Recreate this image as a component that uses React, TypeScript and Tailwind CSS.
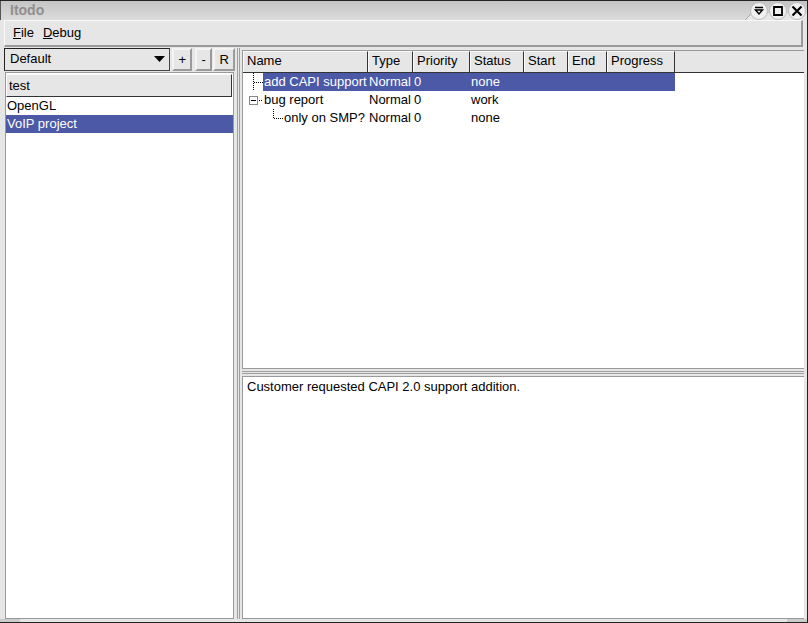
const columns = [
  { label: "Name", width: "w-[125px]" },
  { label: "Type", width: "w-[45px]" },
  { label: "Priority", width: "w-[57px]" },
  { label: "Status", width: "w-[54px]" },
  { label: "Start", width: "w-[44px]" },
  { label: "End", width: "w-[39px]" },
  { label: "Progress", width: "w-[68px]" },
];

function WinButton({ children }: { children: React.ReactNode }) {
  return (
    <div className="w-[18px] h-[18px] rounded-full bg-[#f0f0f0] border border-[#bdbdbd] flex items-center justify-center">
      <svg width="14" height="14" viewBox="0 0 14 14" fill="none" stroke="#000">
        {children}
      </svg>
    </div>
  );
}

function SmallButton({ label, width }: { label: string; width: string }) {
  return (
    <div
      className={`${width} h-[23px] flex items-center justify-center bg-[#e6e6e6] border-2 border-t-[#f4f4f4] border-l-[#f4f4f4] border-r-[#9a9a9a] border-b-[#9a9a9a]`}
    >
      {label}
    </div>
  );
}

function Row({
  name,
  status,
  indent,
  nameWidth,
  selected,
  tree,
}: {
  name: string;
  status: string;
  indent: string;
  nameWidth: string;
  selected?: boolean;
  tree: React.ReactNode;
}) {
  return (
    <div className="flex h-[18px] w-[432px] leading-[18px] relative">
      <div className="absolute left-0 top-0">{tree}</div>
      <div className={`flex ${indent} ${selected ? "bg-[#4c59a6] text-white" : ""}`}>
        <div className={`${nameWidth} pl-[1px] whitespace-nowrap`}>{name}</div>
        <div className="w-[45px] pl-[1px]">Normal</div>
        <div className="w-[57px] pl-[1px]">0</div>
        <div className={selected ? "w-[205px] pl-[1px]" : "w-[54px] pl-[1px]"}>{status}</div>
      </div>
    </div>
  );
}

export default function App() {
  return (
    <div className="w-[808px] h-[623px] overflow-hidden bg-[#e6e6e6] flex flex-col text-[13px] text-black font-['Liberation_Sans',sans-serif] border-t border-r border-[#222]">
      {/* Title bar */}
      <div className="relative h-[19px] shrink-0 flex items-center justify-between pl-[9px] pr-[1px] bg-gradient-to-b from-[#c4c4c4] to-[#dcdcdc] border-l border-l-[#555]">
        <span className="font-bold text-[#8f8f8f] text-[14px]">Itodo</span>
        <svg width="62" height="7" className="absolute right-0 bottom-0" fill="#e6e6e6">
          <path d="M0 7 L7 0 H62 V7 Z" stroke="none" />
          <path d="M0 7 L7 0" stroke="#a8a8a8" fill="none" />
        </svg>
        <div className="relative flex gap-[1px]">
          <WinButton>
            <path d="M3 3.5h8M3.5 6l3.5 4L10.500 6z" strokeWidth="1.4" />
          </WinButton>
          <WinButton>
            <path d="M3 3h8v8H3z" strokeWidth="1.8" />
          </WinButton>
          <WinButton>
            <path d="M2.500 2.500l9 9M11.500 2.500l-9 9" strokeWidth="2.200" />
          </WinButton>
        </div>
      </div>

      {/* Menu bar */}
      <div className="h-[27px] shrink-0 mx-[4px] pl-[8px] flex items-center gap-[9px] border-t border-l border-[#fafafa] border-b-2 border-b-[#9a9a9a] border-r-2 border-r-[#9a9a9a]">
        <span>
          <span className="underline">F</span>ile
        </span>
        <span>
          <span className="underline">D</span>ebug
        </span>
      </div>

      {/* Main */}
      <div className="flex-1 min-h-0 flex pl-[4px] pr-[3px] pt-[1px]">
        {/* Left panel */}
        <div className="w-[231px] shrink-0 flex flex-col">
          <div className="flex gap-[1px] h-[23px] shrink-0">
            <div className="w-[168px] mr-[1px] h-[23px] flex items-center justify-between pl-[5px] pr-[3px] pb-[1px] bg-[#e6e6e6] border border-[#222] border-r-[#444] border-b-[#444]">
              <span>Default</span>
              <svg width="11" height="6" viewBox="0 0 11 6" className="mr-[1px]">
                <path d="M0 0h11L5.500 6z" fill="#000" />
              </svg>
            </div>
            <SmallButton label="+" width="w-[20px]" />
            <div className="w-[1px]" />
            <SmallButton label="-" width="w-[17px]" />
            <SmallButton label="R" width="w-[22px]" />
          </div>
          <div className="flex-1 min-h-0 ml-[1px] mr-[1px] mt-[1px] bg-white border border-[#9a9a9a] pt-[1px]">
            <div className="h-[23px] mr-[1px] flex items-center pl-[2px] bg-[#e6e6e6] border border-t-[#fafafa] border-l-[#fafafa] border-r-[#333] border-b-[#333]">
              test
            </div>
            <div className="h-[18px] leading-[18px] pl-[1px]">OpenGL</div>
            <div className="h-[18px] leading-[18px] pl-[1px] bg-[#4c59a6] text-white">VoIP project</div>
          </div>
        </div>

        {/* Vertical splitter */}
        <div className="w-[7px] shrink-0 flex justify-center">
          <div className="w-[3px] bg-[#e6e6e6] border-x border-[#a0a0a0]" />
        </div>

        {/* Right panel */}
        <div className="flex-1 min-w-0 flex flex-col">
          <div className="h-[319px] shrink-0 mt-[2px] bg-white border border-[#9a9a9a] border-r-0 flex flex-col">
            <div className="h-[22px] shrink-0 flex bg-[#e6e6e6] border-b border-[#333]">
              {columns.map((c) => (
                <div
                  key={c.label}
                  className={`${c.width} shrink-0 pl-[3px] leading-[18px] whitespace-nowrap border-t border-l border-t-[#fafafa] border-l-[#fafafa] border-r border-r-[#333]`}
                >
                  {c.label}
                </div>
              ))}
            </div>
            <Row
              name="add CAPI support"
              status="none"
              indent="ml-[20px]"
              nameWidth="w-[105px]"
              selected
              tree={
                <svg width="21" height="18" fill="none" stroke="#000" strokeDasharray="1 1">
                  <path d="M10.500 0v18M11 9.500h10" />
                </svg>
              }
            />
            <Row
              name="bug report"
              status="work"
              indent="ml-[20px]"
              nameWidth="w-[105px]"
              tree={
                <svg width="21" height="18" fill="none">
                  <rect x="6.500" y="5.500" width="8" height="8" fill="#fff" stroke="#888" />
                  <path d="M8 9.500h5" stroke="#000" />
                  <path d="M16 9.500h4" stroke="#000" strokeDasharray="1 1" />
                </svg>
              }
            />
            <Row
              name="only on SMP?"
              status="none"
              indent="ml-[40px]"
              nameWidth="w-[85px]"
              tree={
                <svg width="41" height="18" fill="none" stroke="#000" strokeDasharray="1 1">
                  <path d="M30.500 0v9.500H40" />
                </svg>
              }
            />
          </div>

          {/* Horizontal splitter */}
          <div className="h-[7px] shrink-0 flex flex-col justify-center">
            <div className="h-[3px] bg-[#e6e6e6] border-y border-[#a0a0a0]" />
          </div>

          <div className="flex-1 min-h-0 bg-white border border-[#9a9a9a] border-r-0 pl-[4px] pt-[1px] leading-[18px]">
            Customer requested CAPI 2.0 support addition.
          </div>
        </div>
      </div>

      {/* Bottom resize handles */}
      <div className="h-[4px] shrink-0 flex justify-between border-b border-[#222]">
        <div className="w-[20px] bg-[#cccccc]" />
        <div className="w-[20px] bg-[#cccccc]" />
      </div>
    </div>
  );
}
